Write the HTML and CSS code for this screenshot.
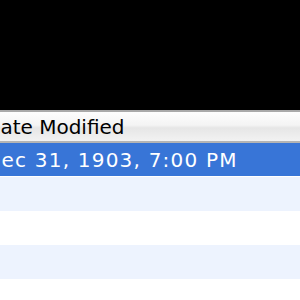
FILE: index.html
```html
<!DOCTYPE html>
<html lang="en">
<head>
<meta charset="UTF-8">
<meta name="viewport" content="width=device-width, initial-scale=1.0">
<title>Date Modified</title>
<link rel="stylesheet" href="styles.css">
</head>
<body>
<div id="top"></div>
<div id="list">
    <div class="head"><span class="label">Date Modified</span></div>
    <ul class="rows">
        <li class="sel"><span class="label date">Dec 31, 1903, 7:00 PM</span></li>
        <li class="alt"></li>
        <li></li>
        <li class="alt"></li>
        <li></li>
    </ul>
</div>
</body>
</html>
```

FILE: styles.css
```css
body {
    margin: 0;
    background: #fff;
    font-family: "DejaVu Sans", Verdana, sans-serif;
}
ul {
    margin: 0;
    padding: 0;
    list-style: none;
}
#top {
    height: 110px;
    background: #000;
}
.head {
    height: 29px;
    border-top: 2px solid #a9a9a9;
    border-bottom: 2px solid #b4b4b4;
    background: linear-gradient(#fdfdfd, #f4f4f4 45%, #e6e6e6 55%, #f2f2f2);
    display: flex;
    align-items: center;
    font-size: 20px;
    color: #000;
}
.label {
    margin-left: -15px;
    white-space: nowrap;
}
.date {
    letter-spacing: 1.2px;
}
.rows li {
    height: 34px;
    display: flex;
    align-items: center;
    font-size: 20px;
}
.rows .sel {
    background: #3875d7;
    color: #fff;
    border-bottom: 1px solid #fff;
    height: 33px;
}
.rows .alt {
    background: #edf3fe;
}
```
